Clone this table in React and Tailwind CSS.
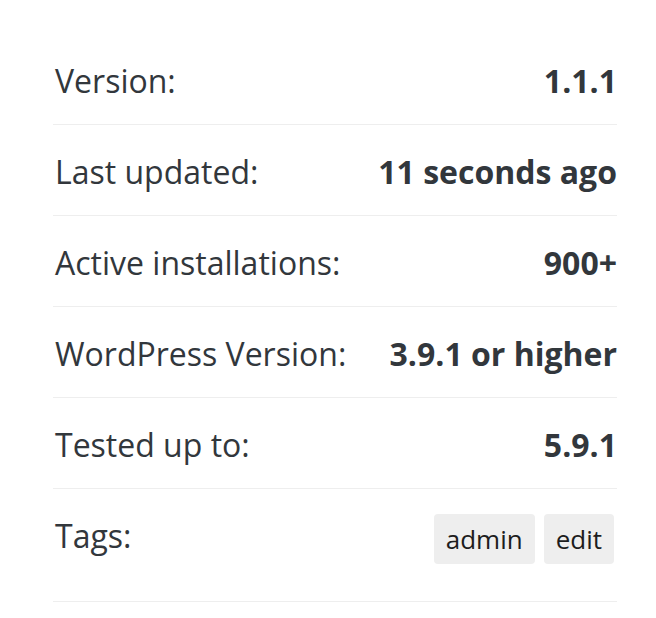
const rows = [
  ['Version:', '1.1.1'],
  ['Last updated:', '11 seconds ago'],
  ['Active installations:', '900+'],
  ['WordPress Version:', '3.9.1 or higher'],
  ['Tested up to:', '5.9.1'],
]

export default function App() {
  return (
    <div className="min-h-[618px] bg-white pl-[53px] pr-[39px] pt-[34px] font-['Open_Sans',sans-serif] text-[#32373c]">
      <ul>
        {rows.map(([label, value]) => (
          <li key={label} className="flex justify-between border-b border-[#eeeeee] pt-[18px] pb-[14px] text-[32px] leading-[58px]">
            <span className="pl-[2px]">{label}</span>
            <strong className="font-bold">{value}</strong>
          </li>
        ))}
        <li className="flex items-start justify-between border-b border-[#eeeeee] pt-[18px] pb-[14px] text-[32px] leading-[58px]">
          <span className="pl-[2px]">Tags:</span>
          <div className="mt-[7px] mb-[23px] mr-[3px] flex gap-[9px]">
            <span className="rounded-[4px] bg-[#eeeeee] px-3 text-[26px] leading-[50px] text-[#1d1d1d]">admin</span>
            <span className="rounded-[4px] bg-[#eeeeee] px-3 text-[26px] leading-[50px] text-[#1d1d1d]">edit</span>
          </div>
        </li>
      </ul>
    </div>
  )
}
